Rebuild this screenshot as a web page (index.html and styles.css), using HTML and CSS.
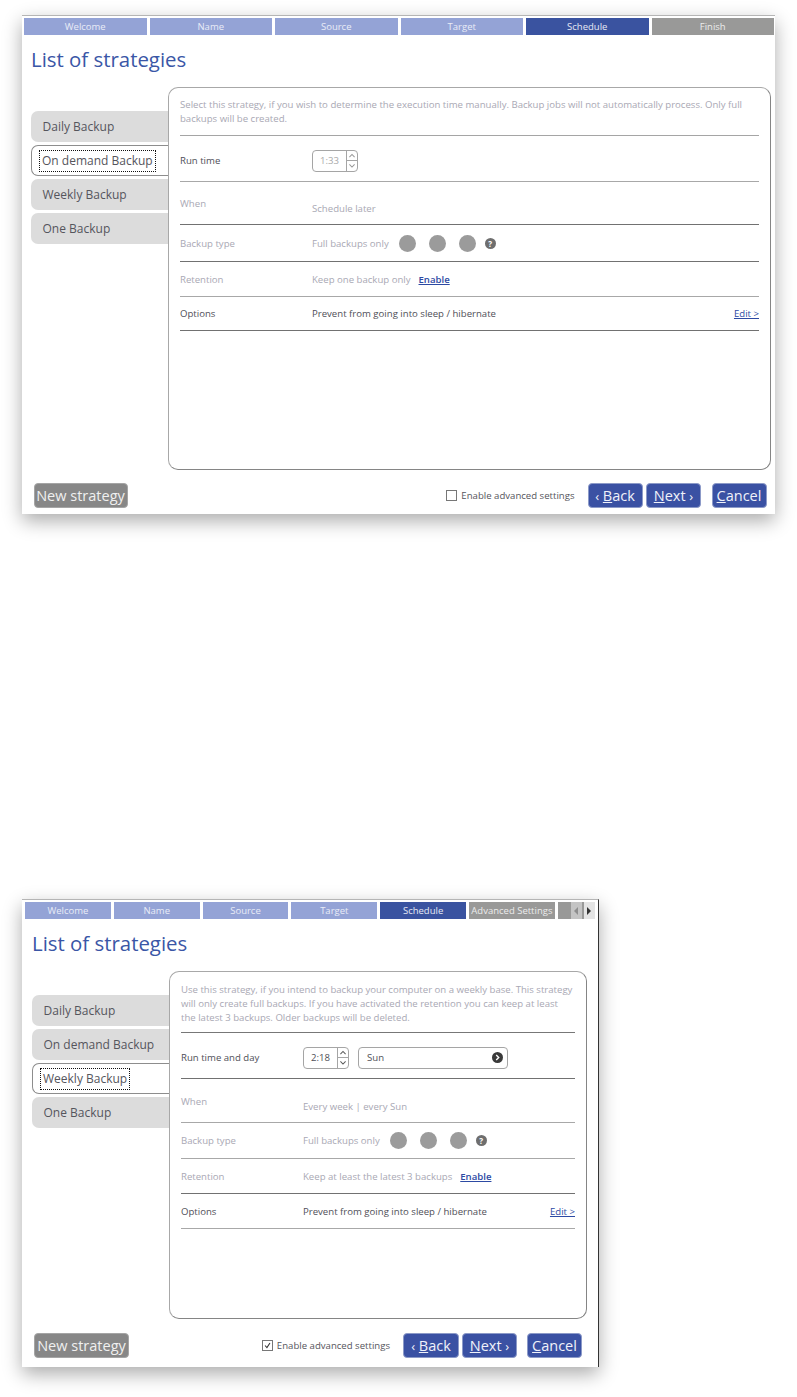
FILE: index.html
```html
<!DOCTYPE html>
<html lang="en">
<head>
<meta charset="utf-8">
<title>List of strategies</title>
<link rel="stylesheet" href="styles.css">
</head>
<body>
<section class="win win-a">
  <nav class="steps">
    <div class="step">Welcome</div><div class="step">Name</div><div class="step">Source</div><div class="step">Target</div><div class="step current">Schedule</div><div class="step off">Finish</div>
  </nav>
  <h1 class="title">List of strategies</h1>
  <div class="main">
    <ul class="tabs">
      <li class="tab">Daily Backup</li>
      <li class="tab active"><span class="focus">On demand Backup</span></li>
      <li class="tab">Weekly Backup</li>
      <li class="tab">One Backup</li>
    </ul>
    <div class="panel">
      <p class="desc">Select this strategy, if you wish to determine the execution time manually. Backup jobs will not automatically process. Only full backups will be created.</p>
      <div class="row h46 light run"><span class="lab dark">Run time</span><div class="val">
        <div class="spin disabled"><span class="spin-text">1:33</span><span class="spin-btns"><svg viewBox="0 0 11 11"><path d="M2.5 7L5.5 4L8.5 7" /></svg><svg viewBox="0 0 11 11"><path d="M2.5 4L5.5 7L8.5 4" /></svg></span></div>
      </div></div>
      <div class="row h43 darkline when"><span class="lab">When</span><div class="val">Schedule later</div></div>
      <div class="row h37 darkline"><span class="lab">Backup type</span><div class="val">Full backups only<span class="dots"><i class="dot"></i><i class="dot"></i><i class="dot"></i></span><span class="help">?</span></div></div>
      <div class="row h35 light"><span class="lab">Retention</span><div class="val">Keep one backup only<a class="link enable" href="#">Enable</a></div></div>
      <div class="row h34 darkline"><span class="lab dark">Options</span><div class="val dark">Prevent from going into sleep / hibernate<a class="link edit" href="#">Edit &gt;</a></div></div>
    </div>
  </div>
  <footer class="foot">
    <button class="btn gray">New strategy</button>
    <label class="check"><i class="box"></i>Enable advanced settings</label>
    <button class="btn blue back"><span class="ang">‹</span> <u>B</u>ack</button>
    <button class="btn blue next"><u>N</u>ext <span class="ang">›</span></button>
    <button class="btn blue cancel"><u>C</u>ancel</button>
  </footer>
</section>

<section class="win win-b">
  <nav class="steps">
    <div class="step">Welcome</div><div class="step">Name</div><div class="step">Source</div><div class="step">Target</div><div class="step current">Schedule</div><div class="step off">Advanced Settings</div>
    <div class="step off more"><span class="arrow faded"><svg viewBox="0 0 10 16"><path d="M7 4v8L3 8z"/></svg></span><span class="arrow"><svg viewBox="0 0 10 16"><path d="M3 4v8l4-4z"/></svg></span></div>
  </nav>
  <h1 class="title">List of strategies</h1>
  <div class="main">
    <ul class="tabs">
      <li class="tab">Daily Backup</li>
      <li class="tab">On demand Backup</li>
      <li class="tab active"><span class="focus">Weekly Backup</span></li>
      <li class="tab">One Backup</li>
    </ul>
    <div class="panel">
      <p class="desc">Use this strategy, if you intend to backup your computer on a weekly base. This strategy will only create full backups. If you have activated the retention you can keep at least the latest 3 backups. Older backups will be deleted.</p>
      <div class="row h46 darkline run"><span class="lab dark">Run time and day</span><div class="val">
        <div class="spin"><span class="spin-text">2:18</span><span class="spin-btns"><svg viewBox="0 0 11 11"><path d="M2.5 7L5.5 4L8.5 7" /></svg><svg viewBox="0 0 11 11"><path d="M2.5 4L5.5 7L8.5 4" /></svg></span></div>
        <div class="select">Sun<svg class="chev" viewBox="0 0 11 11"><circle cx="5.5" cy="5.5" r="5.5"/><path d="M4.2 3L6.7 5.5L4.2 8"/></svg></div>
      </div></div>
      <div class="row h44 light when"><span class="lab">When</span><div class="val">Every week | every Sun</div></div>
      <div class="row h36 light"><span class="lab">Backup type</span><div class="val">Full backups only<span class="dots"><i class="dot"></i><i class="dot"></i><i class="dot"></i></span><span class="help">?</span></div></div>
      <div class="row h35 darkline"><span class="lab">Retention</span><div class="val">Keep at least the latest 3 backups<a class="link enable" href="#">Enable</a></div></div>
      <div class="row h35 light"><span class="lab dark">Options</span><div class="val dark">Prevent from going into sleep / hibernate<a class="link edit" href="#">Edit &gt;</a></div></div>
    </div>
  </div>
  <footer class="foot">
    <button class="btn gray">New strategy</button>
    <label class="check"><i class="box"><svg viewBox="0 0 11 11"><path d="M2.5 5.5L4.8 8L8.5 2.5"/></svg></i>Enable advanced settings</label>
    <button class="btn blue back"><span class="ang">‹</span> <u>B</u>ack</button>
    <button class="btn blue next"><u>N</u>ext <span class="ang">›</span></button>
    <button class="btn blue cancel"><u>C</u>ancel</button>
  </footer>
</section>
</body>
</html>
```
FILE: styles.css
```css
* { box-sizing: border-box; }
html, body { margin: 0; padding: 0; background: #fff; }
body {
  width: 797px;
  height: 1397px;
  overflow: hidden;
  font-family: "Open Sans", sans-serif;
  color: #55555c;
}
.win {
  margin-left: 22px;
  background: #fff;
  border-top: 1px solid #b5b5b5;
  box-shadow: 0 7px 18px rgba(0, 0, 0, .33);
  display: flex;
  flex-direction: column;
}
.win-a { width: 753px; height: 499px; margin-top: 15px; padding: 2px 1px 0 2px; }
.win-b { width: 577px; height: 468px; margin-top: 385px; padding: 2px 4px 0 3px; border-right: 1px solid #333; }

.steps { display: flex; gap: 3px; height: 17px; }
.step {
  flex: 1 1 0;
  min-width: 0;
  background: #94a3d6;
  color: #e9ecf6;
  font-size: 9.5px;
  line-height: 17px;
  text-align: center;
  white-space: nowrap;
}
.step.current { background: #3a53a0; color: #e6e9f4; }
.step.off { background: #999998; color: #ececec; }
.win-b .step { flex: 0 0 85.8px; }
.win-b .step.more {
  flex: 0 0 37px;
  display: flex;
  justify-content: flex-end;
  gap: 2px;
}
.arrow {
  width: 11px;
  height: 17px;
  background: #e4e4e4;
  display: flex;
  align-items: center;
  justify-content: center;
}
.arrow.faded { background: #c4c4c4; }
.arrow svg { width: 10px; height: 16px; fill: #333; }
.arrow.faded svg { fill: #8e8e8e; }

.title {
  margin: 0;
  height: 52px;
  padding: 11px 0 0 7px;
  font-size: 20.4px;
  line-height: 26px;
  font-weight: 400;
  color: #3a56a6;
  white-space: nowrap;
}

.main { display: flex; align-items: flex-start; padding-left: 7px; }
.tabs { list-style: none; margin: 24px 0 0; padding: 0; width: 137px; display: flex; flex-direction: column; gap: 3px; position: relative; z-index: 1; }
.tab {
  height: 31px;
  padding: 0 0 0 11.5px;
  display: flex;
  align-items: center;
  background: #dcdcdc;
  border-radius: 7px 0 0 7px;
  font-size: 12px;
  color: #55555c;
  white-space: nowrap;
}
.tab.active {
  background: #fff;
  border: 1px solid #8d8d8d;
  border-right: 0;
  padding: 0 0 0 7px;
}
.focus { outline: 1px dotted #111; outline-offset: -1px; padding: 3px; line-height: 16px; }

.panel {
  border: 1px solid #a8a8a8;
  border-right-color: #858585;
  border-bottom-color: #858585;
  border-radius: 10px;
  padding: 0 11px;
  background: #fff;
}
.win-a .panel { width: 603px; height: 383px; padding-top: 10px; }
.win-b .panel { width: 418px; height: 348px; padding-top: 11px; }

.desc {
  margin: 0;
  font-size: 9.6px;
  line-height: 14px;
  color: #a9a8b4;
}
.win-a .desc { height: 38px; border-bottom: 1px solid #a5a5a5; }
.win-b .desc { height: 50px; border-bottom: 1px solid #777; }

.row {
  display: flex;
  align-items: center;
  font-size: 9.6px;
  color: #a9a8b4;
  border-bottom: 1px solid #a8a8a8;
}
.row.darkline { border-bottom-color: #717171; }
.row.run { padding-top: 4px; }
.h46 { height: 46px; }
.h44 { height: 44px; }
.h43 { height: 43px; }
.h37 { height: 37px; }
.h36 { height: 36px; }
.h35 { height: 35px; }
.h34 { height: 34px; }
.lab { flex: none; }
.win-a .lab { width: 132px; }
.win-b .lab { width: 122px; }
.val { flex: 1; display: flex; align-items: center; white-space: nowrap; min-width: 0; }
.dark { color: #4f4f58; }
.when .val { position: relative; top: 5px; }
.win-b .when .lab { position: relative; top: 1px; }
.win-b .when .val { top: 6px; }

.dots { display: flex; gap: 13px; margin-left: 10px; }
.dot { display: block; width: 17px; height: 17px; border-radius: 50%; background: #9b9b9b; }
.help {
  margin-left: 9px;
  width: 11px;
  height: 11px;
  border-radius: 50%;
  background: #6e6e6e;
  color: #fff;
  font-size: 8px;
  font-weight: 700;
  line-height: 11px;
  text-align: center;
}
.link { color: #2d4aa3; text-decoration: underline; font-weight: 600; }
.enable { margin-left: 8px; }
.edit { margin-left: auto; font-weight: 400; }

.spin {
  width: 46px;
  height: 22px;
  border: 1px solid #a5a5a5;
  border-radius: 4px;
  display: flex;
  color: #4f4f58;
}
.spin.disabled { color: #aaa; }
.spin-text { flex: 1; padding-left: 7px; line-height: 20px; }
.spin-btns { flex: none; width: 11px; border-left: 1px solid #a5a5a5; display: flex; flex-direction: column; }
.spin-btns svg { flex: 1; min-height: 0; width: 10px; fill: none; stroke: #5a5a5a; stroke-width: 1.2; }
.spin-btns svg + svg { border-top: 1px solid #a5a5a5; }
.spin.disabled .spin-btns svg { stroke: #999; }
.select {
  margin-left: 9px;
  width: 150px;
  height: 22px;
  padding: 0 4px 0 8px;
  border: 1px solid #a5a5a5;
  border-radius: 4px;
  display: flex;
  align-items: center;
  justify-content: space-between;
  color: #4f4f58;
}
.chev { width: 11px; height: 11px; }
.chev circle { fill: #3a3a3a; }
.chev path { fill: none; stroke: #fff; stroke-width: 1.4; }

.foot { display: flex; align-items: center; margin-top: auto; height: 31px; }
.win-a .foot { padding: 0 7.5px 6px 9.5px; }
.win-b .foot { height: 34px; padding: 0 12px 9px 9px; }
.btn {
  flex: none;
  height: 25px;
  width: 55px;
  padding: 0;
  border: 1px solid #8c9ac8;
  border-radius: 4px;
  background: #3a51a3;
  color: #f0f2fa;
  font-family: "Open Sans", sans-serif;
  font-size: 14.5px;
  line-height: 22px;
  white-space: nowrap;
}
.btn.gray { width: 94px; background: #878787; border-color: #a5a5a5; color: #f0f0f0; }
.win-b .btn.gray { width: 95px; }
.win-b .btn.back { width: 56px; }
.next { margin-left: 3px; }
.cancel { margin-left: 10px; }
.win-a .next { margin-left: 3.5px; }
.win-a .cancel { margin-left: 10.5px; }
.check {
  margin-left: auto;
  margin-right: 13px;
  display: flex;
  align-items: center;
  font-size: 9.6px;
  color: #55555c;
  white-space: nowrap;
}
.ang { font-size: 13px; }
.box {
  width: 11px;
  height: 11px;
  border: 1px solid #777;
  margin-right: 4px;
  display: block;
  background: #fff;
}
.box svg { display: block; width: 9px; height: 9px; fill: none; stroke: #333; stroke-width: 1.3; }
```
